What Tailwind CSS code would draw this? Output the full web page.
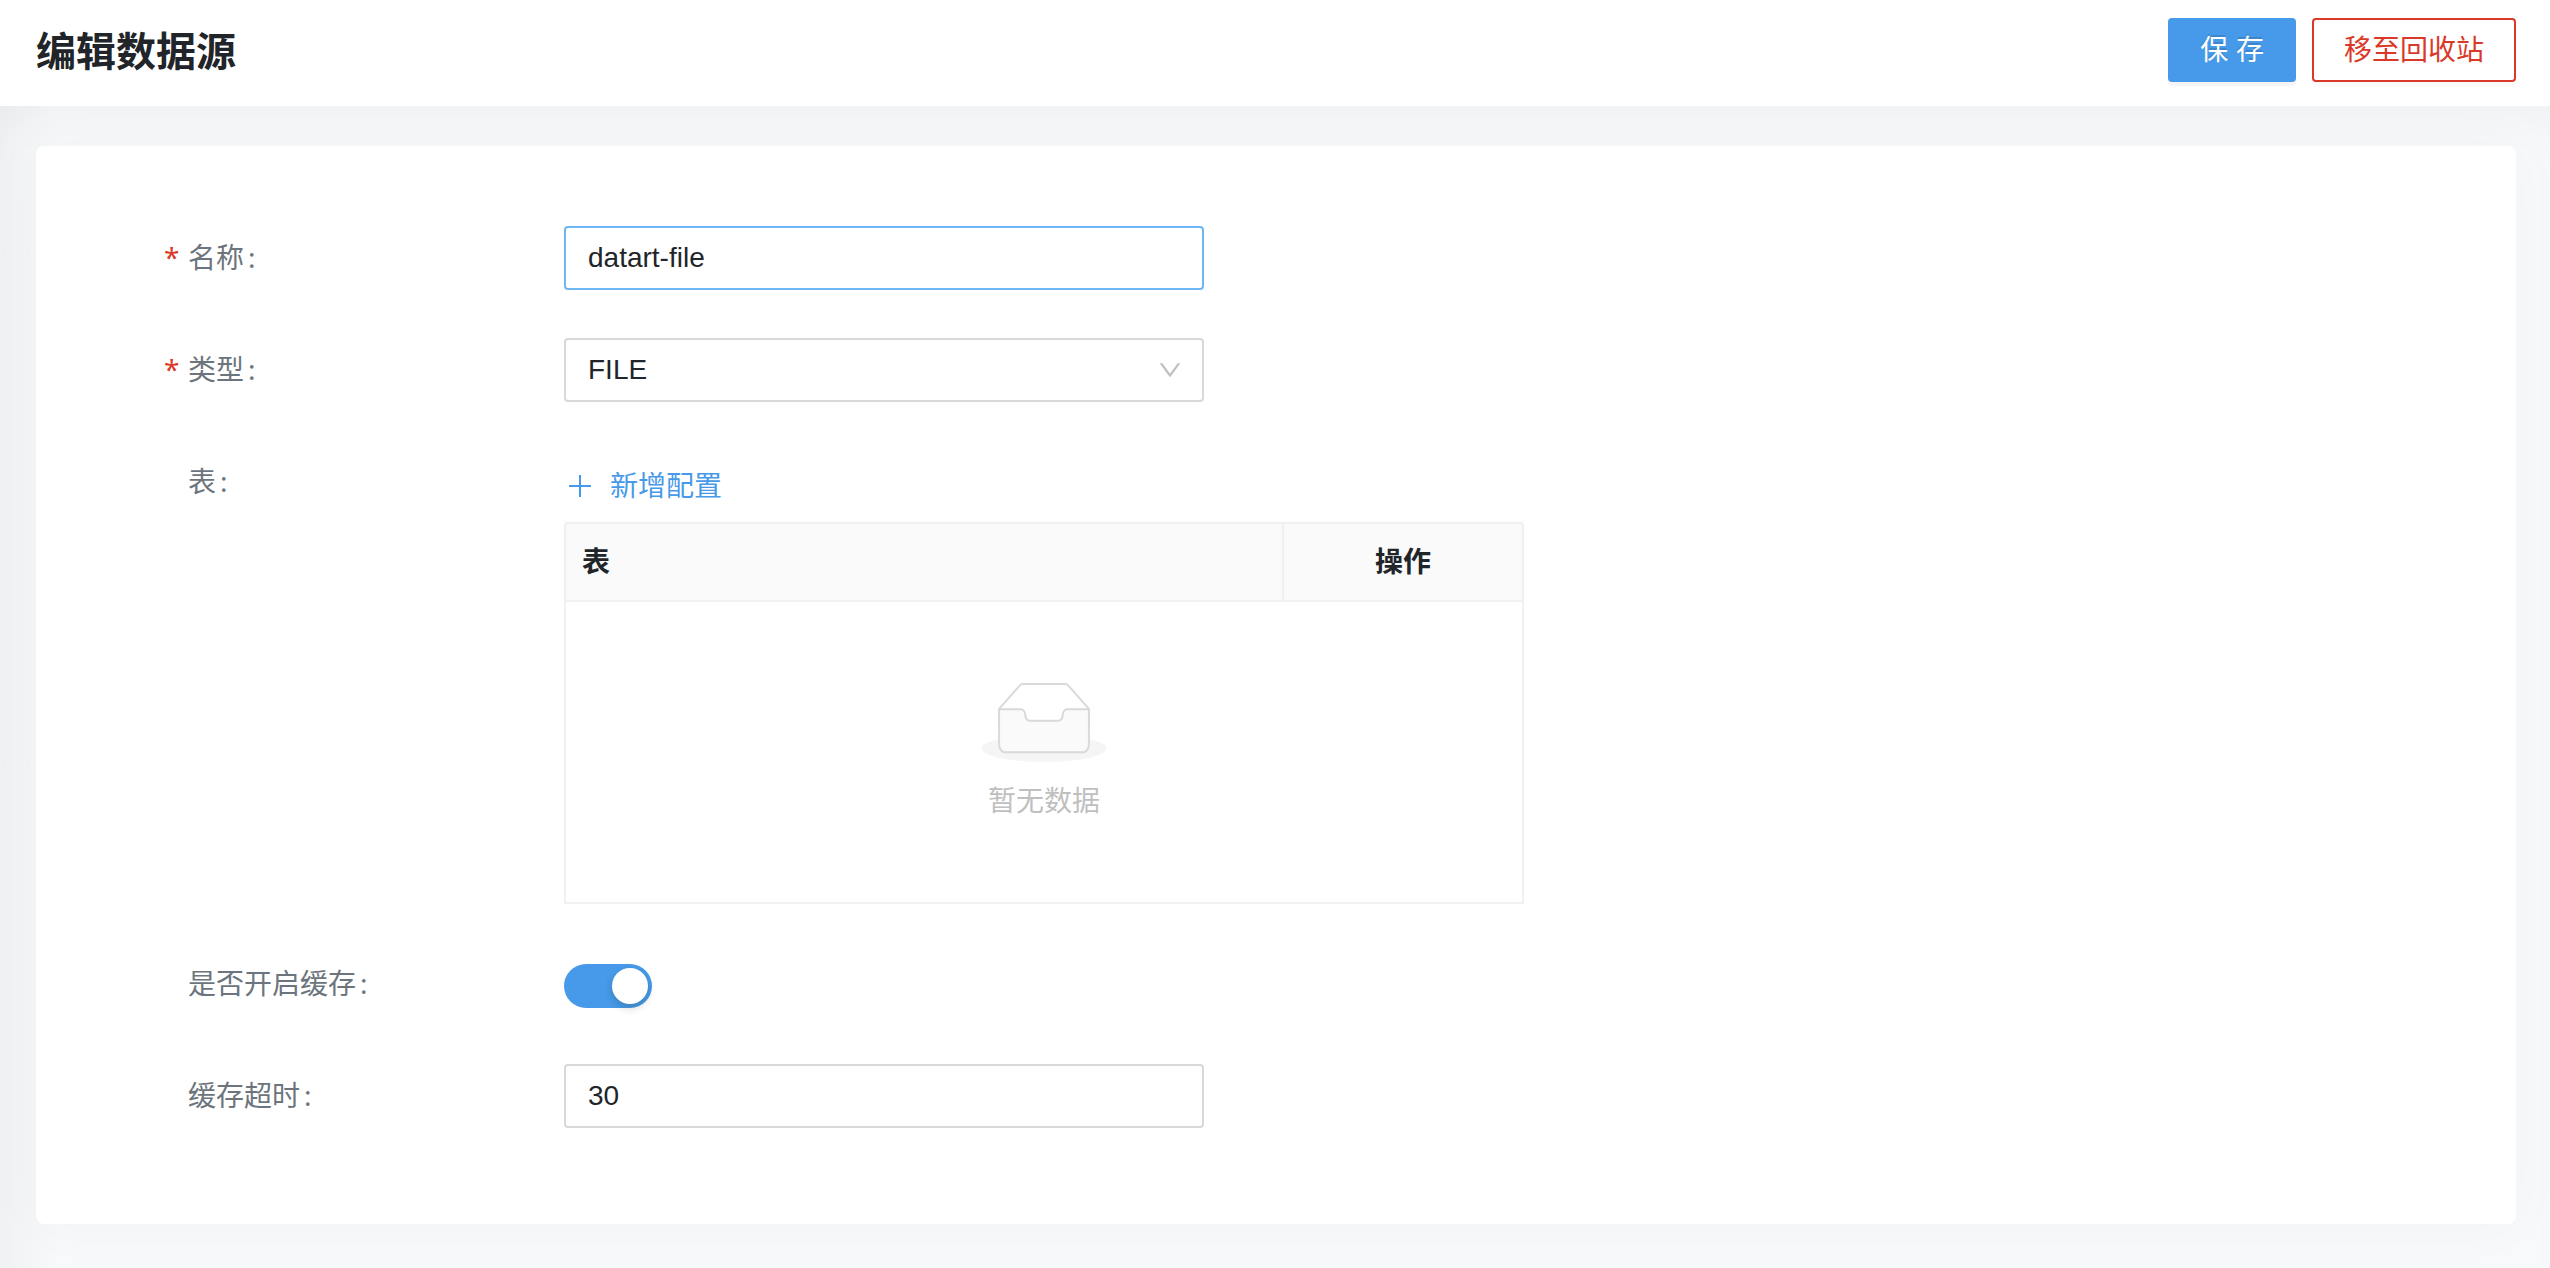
<!DOCTYPE html>
<html lang="zh-CN">
<head>
  <meta charset="UTF-8" />
  <meta name="viewport" content="width=device-width, initial-scale=1.0"/>
  <title>编辑数据源</title>
  <script src="https://cdn.jsdelivr.net/npm/@tailwindcss/browser@4"></script>
</head>
<body class="bg-[#f8f9fb] text-[#212529] font-['Liberation_Sans','Noto_Sans_CJK_SC',sans-serif] text-[28px] leading-[44px] flex flex-col min-h-screen">

  <!-- Header -->
  <header class="bg-white h-[106px] pl-9 pr-[34px] pb-1.5 flex items-center justify-between">
    <h1 class="pt-1 text-[40px] leading-[60px] font-bold">编辑数据源</h1>
    <div class="flex gap-4">
      <button type="submit" form="sourceForm" class="h-16 px-8 pt-0.5 rounded bg-[#479ae9] text-white text-shadow-[0_-2px_0_rgb(0_0_0/0.12)] shadow-[0_4px_0_rgb(0_0_0/0.04)] cursor-pointer">保 存</button>
      <button type="button" class="h-16 px-[30px] pt-0.5 rounded border-2 border-[#da3927] bg-white text-[#da3927] shadow-[0_4px_0_rgb(0_0_0/0.015)] cursor-pointer">移至回收站</button>
    </div>
  </header>

  <main class="grow overflow-hidden pl-9 pr-[34px] pt-10 pb-11 bg-linear-to-r from-black/3 to-transparent to-[60px] shadow-[inset_0_30px_48px_-20px_rgb(0_0_0/0.04)]">
    <form id="sourceForm" class="bg-white rounded-lg shadow-[0_0_60px_rgb(0_0_0/0.03)] pt-20 pb-24 px-32 space-y-12">

      <div class="flex items-start">
        <label for="name" class="w-[400px] shrink-0 flex items-center h-16 pt-0.5 text-[#6c757d]">
          <span class="w-6 pb-1 font-['Noto_Sans'] text-[#da3927]">*</span>名称<span class="pl-1 pb-1 font-['Noto_Sans']">:</span>
        </label>
        <input id="name" type="text" value="datart-file" class="w-full max-w-[640px] h-16 px-[22px] border-2 border-[#6db7f4] rounded outline-none"/>
      </div>

      <div class="flex items-start">
        <label for="type" class="w-[400px] shrink-0 flex items-center h-16 pt-0.5 text-[#6c757d]">
          <span class="w-6 pb-1 font-['Noto_Sans'] text-[#da3927]">*</span>类型<span class="pl-1 pb-1 font-['Noto_Sans']">:</span>
        </label>
        <div class="relative w-full max-w-[640px]">
          <select id="type" class="block appearance-none w-full h-16 px-[22px] border-2 border-[#d9d9d9] rounded bg-white outline-none">
            <option>FILE</option>
            <option>JDBC</option>
            <option>HTTP</option>
          </select>
          <svg class="absolute right-[22px] top-5 size-6 pointer-events-none" viewBox="64 64 896 896" fill="#bfbfbf"><path d="M884 256h-75c-5.100 0-9.900 2.500-12.900 6.600L512 654.200 227.900 262.600c-3-4.100-7.800-6.600-12.900-6.600h-75c-6.500 0-10.300 7.400-6.500 12.700l352.600 486.100c12.800 17.600 39 17.600 51.700 0l352.600-486.100c3.900-5.300.1-12.700-6.400-12.700z"/></svg>
        </div>
      </div>

      <div class="flex items-start">
        <span class="w-[400px] shrink-0 flex items-center h-16 pl-6 pt-0.5 text-[#6c757d]">表<span class="pl-1 pb-1 font-['Noto_Sans']">:</span></span>
        <div class="w-full max-w-[960px]">
          <button type="button" class="h-[72px] px-0.5 flex items-center gap-4 text-[#479ae9] cursor-pointer">
            <svg class="size-7" viewBox="0 0 28 28" fill="currentColor"><path d="M13 3h2v22h-2zM3 13h22v2H3z"/></svg>
            <span class="pt-0.5">新增配置</span>
          </button>
          <table class="w-full table-fixed border-separate border-spacing-0">
            <thead>
              <tr class="h-20 bg-[#fafafa]">
                <th class="px-4 pt-0.5 text-left font-bold border-2 border-[#f0f0f0] rounded-tl">表</th>
                <th class="w-[240px] px-4 pt-0.5 text-center font-bold border-y-2 border-r-2 border-[#f0f0f0] rounded-tr">操作</th>
              </tr>
            </thead>
            <tbody>
              <tr>
                <td colspan="2" class="pt-20 pb-[78px] text-center text-[#bfbfbf] border-x-2 border-b-2 border-[#f0f0f0]">
                  <svg class="block mx-auto mb-[18px] h-20 w-[126px]" viewBox="0 0 64 41">
                    <g transform="translate(0 1)" fill="none" fill-rule="evenodd">
                      <ellipse fill="#f5f5f5" cx="32" cy="33" rx="32" ry="7"/>
                      <g fill-rule="nonzero" stroke="#d9d9d9">
                        <path d="M55 12.760L44.854 1.258C44.367.474 43.656 0 42.907 0H21.093c-.749 0-1.460.474-1.947 1.257L9 12.761V22h46v-9.240z"/>
                        <path fill="#fafafa" d="M41.613 15.931c0-1.605.994-2.930 2.227-2.931H55v18.137C55 33.260 53.680 35 52.050 35h-40.100C10.320 35 9 33.259 9 31.137V13h11.160c1.233 0 2.227 1.323 2.227 2.928v.022c0 1.605 1.005 2.901 2.237 2.901h14.752c1.232 0 2.237-1.308 2.237-2.913v-.007z"/>
                      </g>
                    </g>
                  </svg>
                  暂无数据
                </td>
              </tr>
            </tbody>
          </table>
        </div>
      </div>

      <div class="flex items-center">
        <label for="cacheEnable" class="w-[400px] shrink-0 flex items-center h-16 pl-6 pt-0.5 text-[#6c757d]">是否开启缓存<span class="pl-1 pb-1 font-['Noto_Sans']">:</span></label>
        <input id="cacheEnable" type="checkbox" role="switch" checked class="appearance-none flex items-center w-[88px] h-11 mt-1 px-1 rounded-full bg-[#bfbfbf] checked:bg-[#479ae9] checked:justify-end cursor-pointer before:size-9 before:rounded-full before:bg-white before:shadow-[0_4px_8px_rgb(0_35_11/0.2)]"/>
      </div>

      <div class="flex items-start">
        <label for="cacheTimeout" class="w-[400px] shrink-0 flex items-center h-16 pl-6 pt-0.5 text-[#6c757d]">缓存超时<span class="pl-1 pb-1 font-['Noto_Sans']">:</span></label>
        <input id="cacheTimeout" type="text" inputmode="numeric" value="30" class="w-full max-w-[640px] h-16 px-[22px] border-2 border-[#d9d9d9] rounded outline-none"/>
      </div>

    </form>
  </main>

</body>
</html>
